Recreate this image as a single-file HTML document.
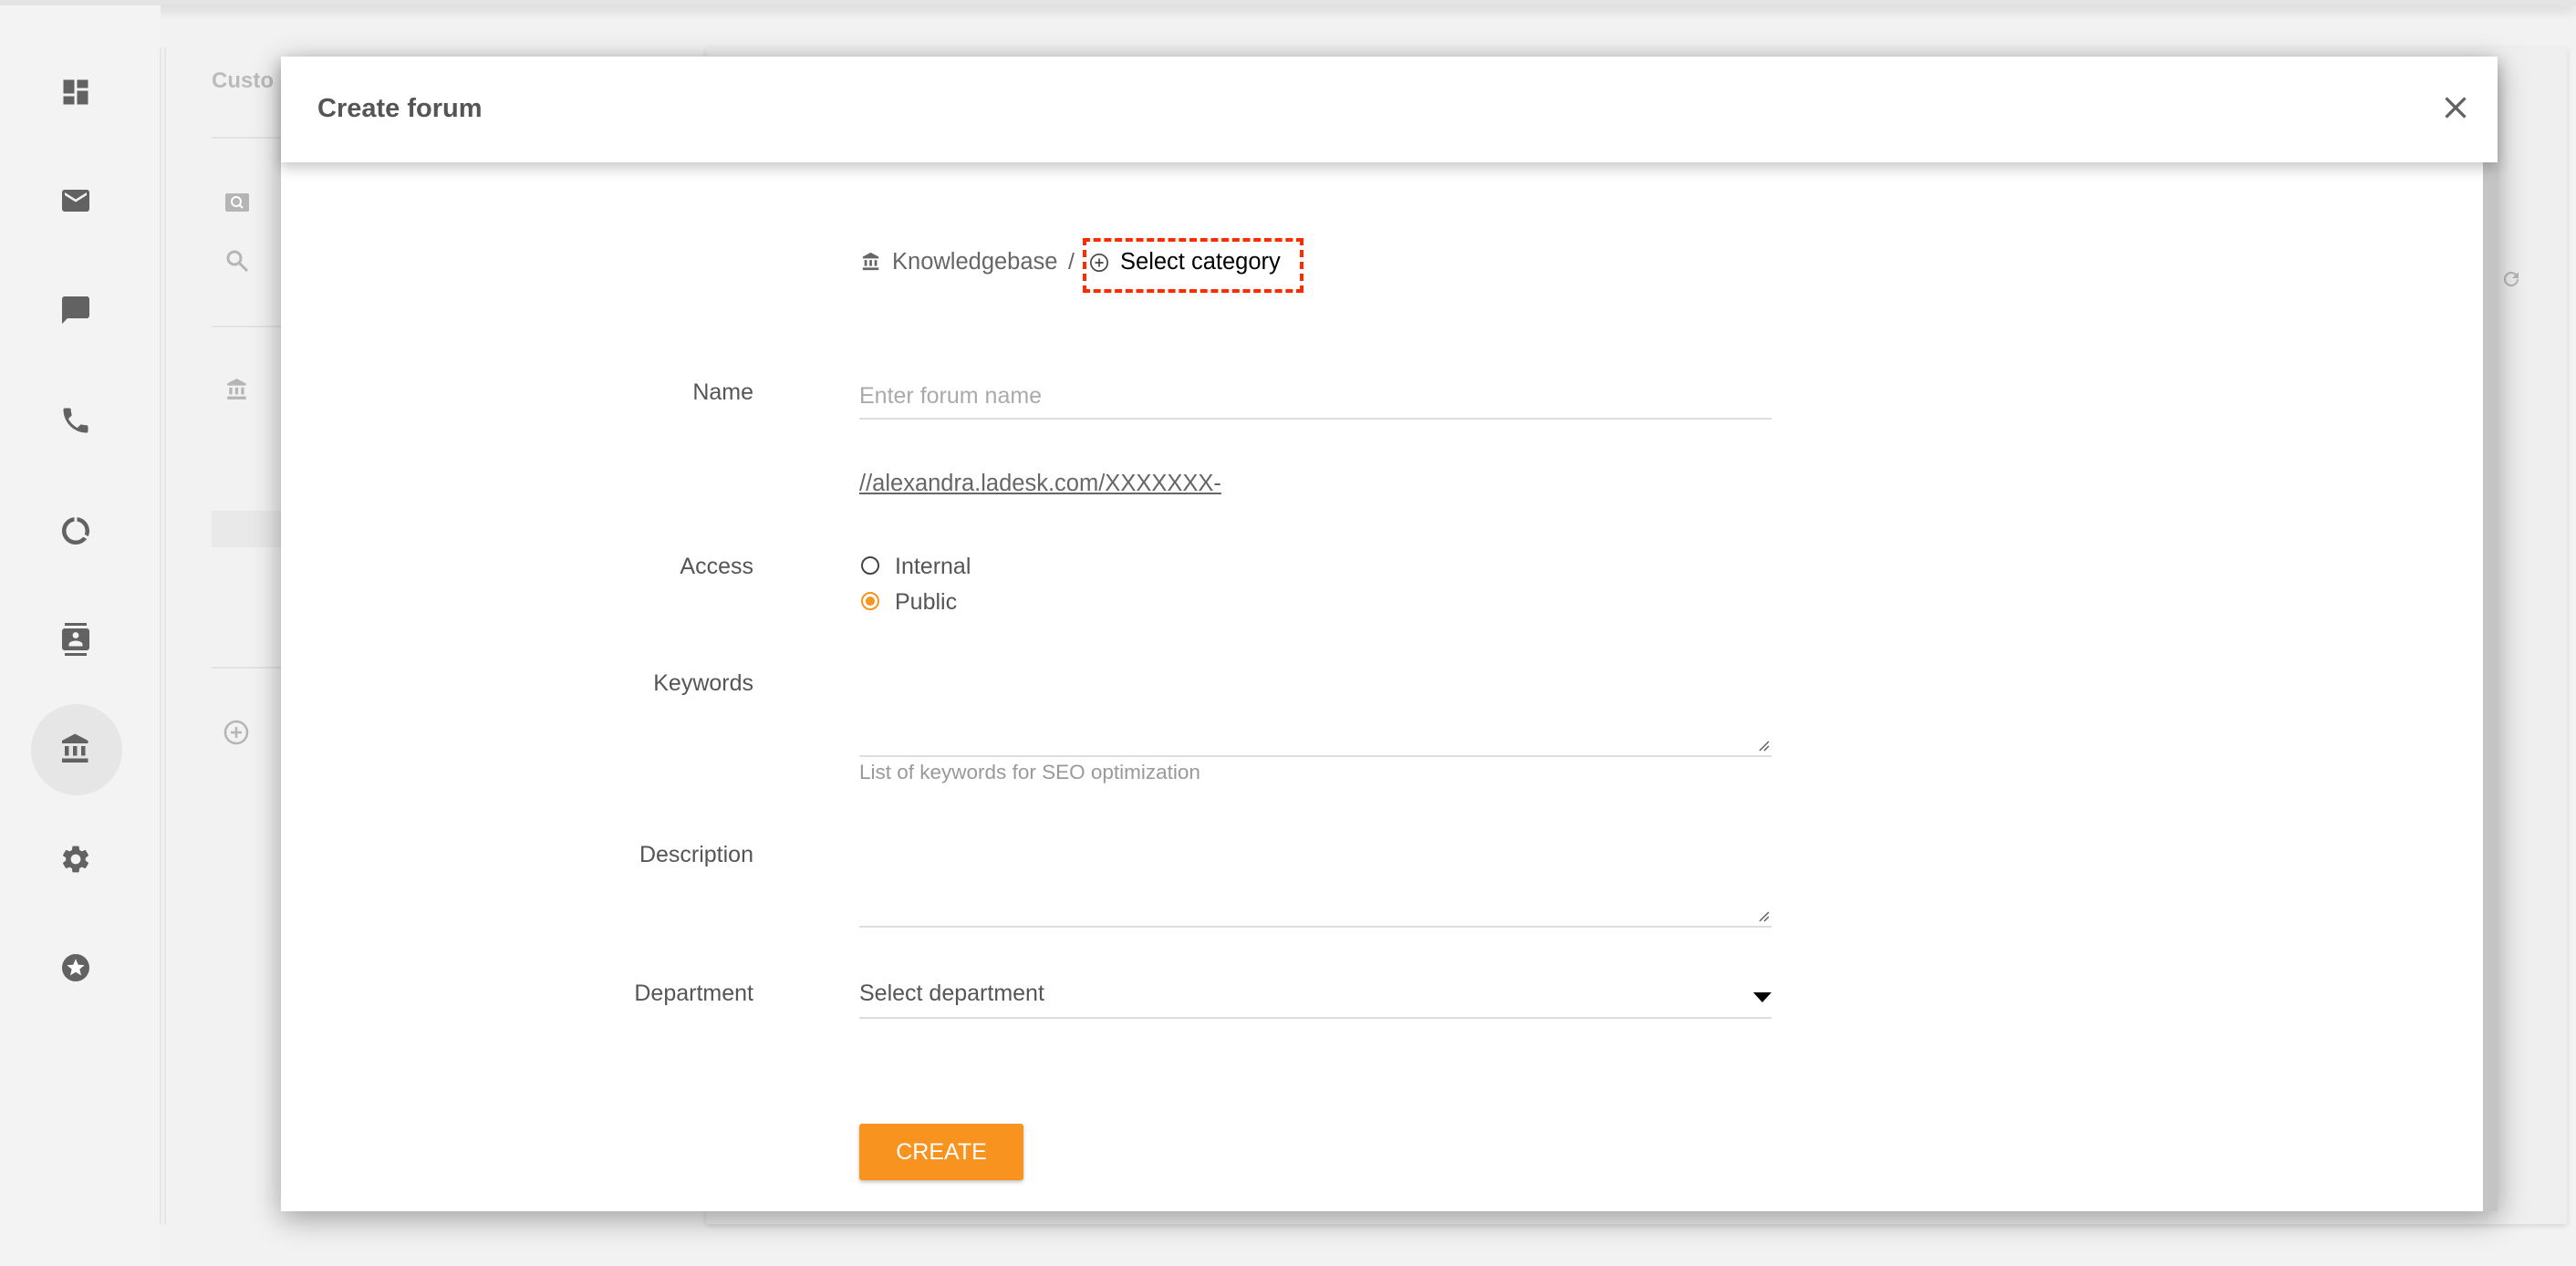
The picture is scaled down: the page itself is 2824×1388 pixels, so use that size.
<!DOCTYPE html>
<html><head><meta charset="utf-8">
<style>
*{margin:0;padding:0;box-sizing:border-box}
body{width:2824px;height:1388px;overflow:hidden;background:#f2f2f2;font-family:"Liberation Sans",Arial,sans-serif;position:relative}
.topbar{position:absolute;left:0;top:0;width:2824px;height:6px;background:#e4e4e4;box-shadow:0 4px 14px rgba(0,0,0,.2)}
.side{position:absolute;left:0;top:6px;width:176px;height:1382px;background:#f3f3f3}
.vline{position:absolute;top:52px;width:2px;height:1290px;background:#e6e6e6}
.ico{position:absolute;left:65px;width:36px;height:36px}
.panel{position:absolute;left:182px;top:52px;width:2632px;height:1290px;background:#f2f2f2}
.rpanel{position:absolute;left:774px;top:52px;width:2040px;height:1290px;background:#efefef;box-shadow:0 2px 6px rgba(0,0,0,.12)}
.hl{position:absolute;left:232px;height:2px;background:#e3e3e3;width:560px}
.modal{position:absolute;left:308px;top:62px;width:2430px;height:1266px;background:#fff;box-shadow:0 8px 30px rgba(0,0,0,.35)}
.mhead{position:absolute;left:0;top:0;width:2430px;height:116px;background:#fff;box-shadow:0 6px 14px rgba(0,0,0,.22);z-index:2}
.mhead h1{position:absolute;left:40px;top:41px;font-size:29px;font-weight:bold;color:#555}
.scroll{position:absolute;right:0;top:116px;width:16px;height:1150px;background:#c4c4c4}
.lbl{position:absolute;right:1912px;font-size:25px;color:#555;text-align:right;white-space:nowrap}
.f{position:absolute;left:634px;width:1000px;font-size:25px;white-space:nowrap}
.line{position:absolute;left:634px;width:1000px;height:2px;background:#ddd}
</style></head><body>
<div class="topbar"></div>
<div class="side"></div>
<div class="panel"></div>
<div class="vline" style="left:175px"></div>
<div class="vline" style="left:180px"></div>
<div class="rpanel"></div>
<div style="position:absolute;left:232px;top:75px;font-size:24px;font-weight:bold;color:#bbb">Custo</div>
<div class="hl" style="top:150px"></div>
<div class="hl" style="top:357px"></div>
<div class="hl" style="top:731px"></div>
<div style="position:absolute;left:232px;top:560px;width:560px;height:40px;background:#e9e9e9"></div>
<svg style="position:absolute;left:246px;top:210px" width="28" height="24" viewBox="0 0 28 24"><rect x="1" y="2" width="26" height="20" rx="2" fill="#b5b5b5"/><circle cx="13" cy="11" r="5" fill="none" stroke="#fff" stroke-width="2"/><path d="M16 14l4 4" stroke="#fff" stroke-width="2"/></svg>
<svg style="position:absolute;left:246px;top:272px" width="28" height="28" viewBox="0 0 28 28"><circle cx="11" cy="11" r="7" fill="none" stroke="#b5b5b5" stroke-width="3"/><path d="M16 16l9 9" stroke="#b5b5b5" stroke-width="3"/></svg>
<svg style="position:absolute;left:246px;top:414px" width="28" height="26" viewBox="0 0 24 24"><path d="M4 10v7h3v-7H4zm6 0v7h3v-7h-3zM2 22h19v-3H2v3zm14-12v7h3v-7h-3zm-4.5-9L2 6v2h19V6l-9.5-5z" fill="#b5b5b5"/></svg>
<svg style="position:absolute;left:244px;top:788px" width="30" height="30" viewBox="0 0 30 30"><circle cx="15" cy="15" r="12" fill="none" stroke="#b5b5b5" stroke-width="2.5"/><path d="M15 9v12M9 15h12" stroke="#b5b5b5" stroke-width="2.5"/></svg>
<div style="position:absolute;left:34px;top:772px;width:100px;height:100px;border-radius:50%;background:#e6e6e6"></div>
<svg class="ico" style="top:83px" viewBox="0 0 24 24"><path d="M3 13h8V3H3v10zm0 8h8v-6H3v6zm10 0h8V11h-8v10zm0-18v6h8V3h-8z" fill="#626262"/></svg>
<svg class="ico" style="top:202px" viewBox="0 0 24 24"><path d="M20 4H4c-1.1 0-2 .9-2 2v12c0 1.1.9 2 2 2h16c1.1 0 2-.9 2-2V6c0-1.1-.9-2-2-2zm0 4l-8 5-8-5V6l8 5 8-5v2z" fill="#626262"/></svg>
<svg class="ico" style="top:322px" viewBox="0 0 24 24"><path d="M20 2H4c-1.1 0-2 .9-2 2v18l4-4h14c1.1 0 2-.9 2-2V4c0-1.1-.9-2-2-2z" fill="#626262"/></svg>
<svg class="ico" style="top:443px" viewBox="0 0 24 24"><path d="M6.62 10.79c1.440 2.83 3.76 5.14 6.59 6.59l2.2-2.2c.27-.27.67-.36 1.02-.24 1.12.37 2.33.57 3.57.57.55 0 1 .45 1 1V20c0 .55-.45 1-1 1-9.39 0-17-7.61-17-17 0-.55.45-1 1-1h3.5c.55 0 1 .45 1 1 0 1.25.2 2.45.57 3.57.11.35.03.74-.25 1.02l-2.2 2.2z" fill="#626262"/></svg>
<svg class="ico" style="top:564px" viewBox="0 0 24 24"><path d="M13 2.05v3.03c3.39.49 6 3.39 6 6.92 0 .9-.18 1.75-.48 2.54l2.6 1.53c.56-1.240.88-2.62.88-4.07 0-5.18-3.95-9.45-9-9.95zM12 19c-3.87 0-7-3.13-7-7 0-3.53 2.61-6.43 6-6.92V2.05c-5.06.5-9 4.76-9 9.95 0 5.52 4.47 10 9.99 10 3.31 0 6.24-1.61 8.06-4.09l-2.6-1.53C16.17 17.98 14.21 19 12 19z" fill="#626262"/></svg>
<svg class="ico" style="top:683px" viewBox="0 0 24 24"><path d="M20 0H4v2h16V0zM4 24h16v-2H4v2zM20 4H4c-1.1 0-2 .9-2 2v12c0 1.1.9 2 2 2h16c1.1 0 2-.9 2-2V6c0-1.1-.9-2-2-2zm-8 2.75c1.24 0 2.25 1.01 2.25 2.25s-1.01 2.25-2.25 2.25S9.75 10.24 9.75 9 10.76 6.75 12 6.750zM17 17H7v-1.5c0-1.67 3.33-2.5 5-2.5s5 .83 5 2.5V17z" fill="#626262"/></svg>
<svg class="ico" style="top:803px" viewBox="0 0 24 24"><path d="M4 10v7h3v-7H4zm6 0v7h3v-7h-3zM2 22h19v-3H2v3zm14-12v7h3v-7h-3zm-4.5-9L2 6v2h19V6l-9.5-5z" fill="#626262"/></svg>
<svg class="ico" style="top:924px" viewBox="0 0 24 24"><path d="M19.14 12.94c.04-.3.06-.61.06-.94 0-.32-.02-.64-.07-.94l2.03-1.58c.18-.14.23-.41.12-.61l-1.92-3.32c-.12-.22-.37-.29-.59-.22l-2.39.96c-.5-.38-1.03-.7-1.62-.94l-.36-2.54c-.04-.24-.24-.41-.48-.41h-3.84c-.24 0-.43.17-.47.41l-.36 2.54c-.59.24-1.13.57-1.62.94l-2.39-.96c-.22-.08-.47 0-.59.22L2.74 8.87c-.12.21-.08.47.12.61l2.03 1.58c-.05.3-.09.63-.09.94s.02.64.07.94l-2.03 1.58c-.18.14-.23.41-.12.61l1.92 3.32c.12.22.37.29.59.22l2.39-.96c.5.38 1.03.7 1.62.94l.36 2.54c.05.24.24.41.48.41h3.84c.24 0 .44-.17.47-.41l.36-2.54c.59-.24 1.13-.56 1.62-.94l2.39.96c.22.08.47 0 .59-.22l1.92-3.32c.12-.22.07-.47-.12-.61l-2.01-1.58zM12 15.6c-1.98 0-3.6-1.62-3.6-3.6s1.62-3.6 3.6-3.6 3.6 1.62 3.6 3.6-1.62 3.6-3.6 3.6z" fill="#626262"/></svg>
<svg class="ico" style="top:1043px" viewBox="0 0 24 24"><circle cx="12" cy="12" r="10" fill="#626262"/><path d="M12 5.5l1.8 4.3 4.6.3-3.5 3 1.1 4.5L12 15.2l-4 2.4 1.1-4.5-3.5-3 4.6-.3z" fill="#fff"/></svg>
<svg style="position:absolute;left:2741px;top:294px" width="24" height="24" viewBox="0 0 24 24"><path d="M17.65 6.35A7.95 7.95 0 0012 4a8 8 0 108 8h-2a6 6 0 11-1.76-4.24L13 11h7V4l-2.35 2.35z" fill="#b5b5b5"/></svg>

<div class="modal">
  <div class="mhead"><h1>Create forum</h1>
    <svg style="position:absolute;left:2364px;top:36px" width="40" height="40" viewBox="0 0 24 24"><path d="M19 6.41L17.59 5 12 10.59 6.41 5 5 6.41 10.59 12 5 17.59 6.41 19 12 13.41 17.59 19 19 17.59 13.41 12z" fill="#626262"/></svg>
  </div>
  <div class="scroll"></div>
  <svg style="position:absolute;left:636px;top:214px" width="22" height="22" viewBox="0 0 24 24"><path d="M4 10v7h3v-7H4zm6 0v7h3v-7h-3zM2 22h19v-3H2v3zm14-12v7h3v-7h-3zm-4.5-9L2 6v2h19V6l-9.5-5z" fill="#666"/></svg>
  <div class="f" style="left:670px;top:211px;color:#666;font-size:25.5px">Knowledgebase</div>
  <div class="f" style="left:863px;top:211px;color:#666">/</div>
  <div style="position:absolute;left:879px;top:199px;width:242px;height:60px;border:4px dashed #ff2a00"></div>
  <svg style="position:absolute;left:886px;top:215px" width="22" height="22" viewBox="0 0 24 24"><circle cx="12" cy="12" r="10" fill="none" stroke="#444" stroke-width="1.8"/><path d="M12 7v10M7 12h10" stroke="#444" stroke-width="1.8"/></svg>
  <div class="f" style="left:920px;top:211px;color:#000;font-size:25.5px">Select category</div>

  <div class="lbl" style="top:354px">Name</div>
  <div class="f" style="top:358px;color:#aaa">Enter forum name</div>
  <div class="line" style="top:396px"></div>
  <div class="f" style="top:454px;color:#666;text-decoration:underline;font-size:25.5px">//alexandra.ladesk.com/XXXXXXX-</div>

  <div class="lbl" style="top:545px">Access</div>
  <div style="position:absolute;left:636px;top:548px;width:20px;height:20px;border:2px solid #444;border-radius:50%"></div>
  <div class="f" style="left:673px;top:545px;color:#555">Internal</div>
  <div style="position:absolute;left:636px;top:587px;width:20px;height:20px;border:2px solid #f7931e;border-radius:50%"><div style="margin:3px;width:10px;height:10px;border-radius:50%;background:#f7931e"></div></div>
  <div class="f" style="left:673px;top:584px;color:#555">Public</div>

  <div class="lbl" style="top:673px">Keywords</div>
  <div class="line" style="top:766px"></div>
  <svg style="position:absolute;left:1618px;top:748px" width="14" height="14" viewBox="0 0 14 14"><path d="M13 3L3 13M13 8L8 13" stroke="#555" stroke-width="1.3"/></svg>
  <div class="f" style="top:772px;font-size:22.5px;color:#999">List of keywords for SEO optimization</div>

  <div class="lbl" style="top:861px">Description</div>
  <div class="line" style="top:953px"></div>
  <svg style="position:absolute;left:1618px;top:935px" width="14" height="14" viewBox="0 0 14 14"><path d="M13 3L3 13M13 8L8 13" stroke="#555" stroke-width="1.3"/></svg>

  <div class="lbl" style="top:1013px">Department</div>
  <div class="f" style="top:1013px;color:#555">Select department</div>
  <svg style="position:absolute;left:1614px;top:1026px" width="20" height="11" viewBox="0 0 20 11"><path d="M0 0h20L10 11z" fill="#000"/></svg>
  <div class="line" style="top:1053px"></div>

  <div style="position:absolute;left:634px;top:1170px;width:180px;height:62px;background:#f7931e;border-radius:3px;box-shadow:0 2px 4px rgba(0,0,0,.25);color:#fff;font-size:25px;text-align:center;line-height:62px">CREATE</div>
</div>
</body></html>
